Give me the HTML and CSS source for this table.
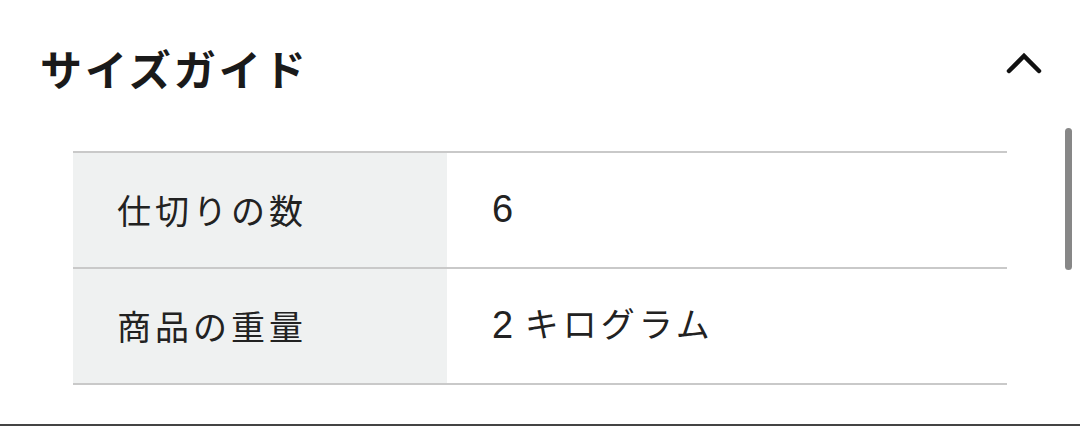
FILE: index.html
```html
<!DOCTYPE html>
<html lang="ja">
<head>
<meta charset="utf-8">
<link rel="stylesheet" href="styles.css">
</head>
<body>
<div class="page">
  <div class="header">
    <h2 class="title">サイズガイド</h2>
    <svg class="chevron" width="36" height="24" viewBox="0 0 36 24"><polyline points="3,20 18,5 33,20" fill="none" stroke="#111" stroke-width="4.5" stroke-linecap="round" stroke-linejoin="miter"/></svg>
  </div>
  <div class="content">
    <table class="spec">
      <tr><th>仕切りの数</th><td><span class="num">6</span></td></tr>
      <tr><th>商品の重量</th><td><span class="num">2</span> キログラム</td></tr>
    </table>
  </div>
  <div class="scrollbar"></div>
  <div class="bottom-line"></div>
</div>
</body>
</html>
```
FILE: styles.css
```css
html, body { margin: 0; padding: 0; background: #fff; }
body { font-family: "Noto Sans CJK JP", "Liberation Sans", sans-serif; color: #222; }
.page { position: relative; width: 1080px; height: 426px; overflow: hidden; }
.header { display: flex; justify-content: space-between; align-items: center; height: 136px; padding: 0 38px 0 40px; box-sizing: border-box; }
.title { margin: 0; font-size: 42px; font-weight: 700; letter-spacing: 3px; color: #1a1a1a; line-height: 1; }
.chevron { display: block; margin-top: -10px; }
.content { padding: 15px 73px 0 73px; height: 250px; box-sizing: border-box; }
.spec { width: 934px; border-collapse: collapse; }
.spec tr { border-top: 2px solid #c9c9c9; border-bottom: 2px solid #c9c9c9; }
.spec th, .spec td { height: 114px; padding: 0 0 0 44px; text-align: left; font-weight: 400; font-size: 34px; letter-spacing: 4px; vertical-align: middle; line-height: 1.2; }
.spec th { width: 330px; background: #eff1f1; }
.spec td { padding-left: 45px; }
.num { font-family: "Liberation Sans", sans-serif; font-size: 38px; letter-spacing: 0; vertical-align: -1px; }
.scrollbar { position: absolute; left: 1065px; top: 128px; width: 7px; height: 142px; border-radius: 4px; background: #878787; }
.bottom-line { height: 40px; border-bottom: 2px solid #444; box-sizing: border-box; }
```
